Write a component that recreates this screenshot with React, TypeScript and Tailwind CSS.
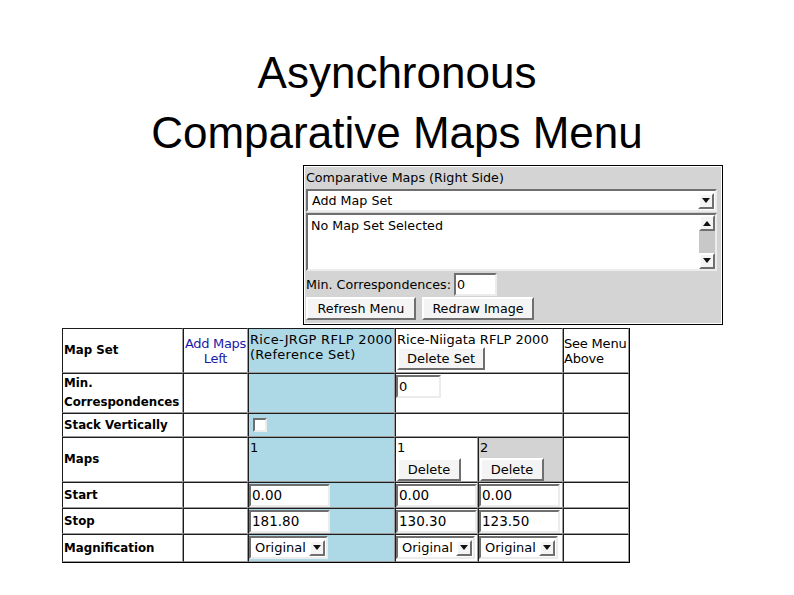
import React from 'react';

/* ─── shared widget styles ─────────────────────────────────────────── */
const inset =
  'bg-white border-2 border-t-[#6f6f6f] border-l-[#6f6f6f] border-b-[#ececec] border-r-[#ececec]';
const raised =
  'bg-[#f4f4f4] border-2 border-t-white border-l-white border-b-[#6f6f6f] border-r-[#6f6f6f]';
const cell =
  'border border-t-[#1c1c1c] border-l-[#1c1c1c] border-b-[#9c9c9c] border-r-[#9c9c9c] p-0';
const top = `${cell} align-top`;

function Arrow({ up = false }: { up?: boolean }) {
  return (
    <svg width="8" height="6" viewBox="0 0 8 6">
      <path d={up ? 'M0 6 L4 1 L8 6 Z' : 'M0 0 L8 0 L4 5 Z'} fill="#111" />
    </svg>
  );
}

function DropBtn() {
  return (
    <span className={`${raised} flex h-[16px] w-[16px] items-center justify-center`}>
      <Arrow />
    </span>
  );
}

function Select({ label, w }: { label: string; w: string }) {
  return (
    <div className={`${inset} ${w} flex h-[23px] items-center justify-between pl-[4px] pr-px`}>
      <span>{label}</span>
      <DropBtn />
    </div>
  );
}

function Btn({ label, w }: { label: string; w: string }) {
  return (
    <div className={`${raised} ${w} flex h-[23px] items-center justify-center`}>
      {label}
    </div>
  );
}

function Field({ value, w }: { value: string; w: string }) {
  return (
    <div className={`${inset} ${w} flex h-[23px] items-center pl-px`}>{value}</div>
  );
}

/* ─── top panel ────────────────────────────────────────────────────── */
function ComparativePanel() {
  return (
    <div className="ml-[303px] w-[420px] border border-black bg-white p-px">
      <div className="flex h-[156px] flex-col bg-[#d4d4d4] px-px text-[12.7px] text-black">
        <div className="flex h-[22px] items-center">Comparative Maps (Right Side)</div>
        <Select label="Add Map Set" w="w-[411px]" />
        <div className={`${inset} mt-px flex h-[58px] w-[411px] justify-between`}>
          <span className="pl-[3px] pt-px">No Map Set Selected</span>
          <div className="flex w-[16px] flex-col justify-between bg-[#c8c8c8]">
            <span className={`${raised} flex h-[16px] items-center justify-center`}>
              <Arrow up />
            </span>
            <span className={`${raised} flex h-[16px] items-center justify-center`}>
              <Arrow />
            </span>
          </div>
        </div>
        <div className="mt-px flex h-[25px] items-center gap-[3px]">
          <span>Min. Correspondences:</span>
          <Field value="0" w="w-[43px]" />
        </div>
        <div className="flex items-center gap-[6px]">
          <Btn label="Refresh Menu" w="w-[110px]" />
          <Btn label="Redraw Image" w="w-[112px]" />
        </div>
      </div>
    </div>
  );
}

/* ─── map set table ────────────────────────────────────────────────── */
function MapTable() {
  const blue = 'bg-[#add8e6]';
  const label = `${cell} align-middle font-bold text-[11.8px] pl-px whitespace-nowrap`;
  return (
    <table className="ml-[62px] mt-[3px] table-fixed border-separate border-spacing-0 border-b border-r border-black text-[13px] leading-[15px] text-black">
      <colgroup>
        <col className="w-[121px]" />
        <col className="w-[65px]" />
        <col className="w-[147px]" />
        <col className="w-[83px]" />
        <col className="w-[85px]" />
        <col className="w-[66px]" />
      </colgroup>
      <tbody>
        <tr className="h-[45px]">
          <td className={label}>Map Set</td>
          <td className={`${cell} whitespace-nowrap text-center align-middle tracking-[-0.3px] text-[#1a1aa8]`}>
            Add Maps
            <br />
            Left
          </td>
          <td className={`${top} ${blue} whitespace-nowrap pl-px pt-[3px] tracking-[0.3px]`}>
            Rice-JRGP RFLP 2000
            <br />
            (Reference Set)
          </td>
          <td className={`${top} pl-px pt-[3px]`} colSpan={2}>
            <div className="whitespace-nowrap">Rice-Niigata RFLP 2000</div>
            <Btn label="Delete Set" w="w-[88px]" />
          </td>
          <td className={`${cell} whitespace-nowrap align-middle tracking-[-0.2px]`}>
            See Menu
            <br />
            Above
          </td>
        </tr>
        <tr className="h-[40px]">
          <td className={`${label} leading-[19px]`}>
            Min.
            <br />
            Correspondences
          </td>
          <td className={cell} />
          <td className={`${cell} ${blue}`} />
          <td className={`${top} pt-px`} colSpan={2}>
            <Field value="0" w="w-[45px]" />
          </td>
          <td className={cell} />
        </tr>
        <tr className="h-[24px]">
          <td className={label}>Stack Vertically</td>
          <td className={cell} />
          <td className={`${top} ${blue} pl-[4px] pt-[4px]`}>
            <div className={`${inset} h-[14px] w-[14px]`} />
          </td>
          <td className={cell} colSpan={2} />
          <td className={cell} />
        </tr>
        <tr className="h-[45px]">
          <td className={label}>Maps</td>
          <td className={cell} />
          <td className={`${top} ${blue} pl-px pt-[2px]`}>1</td>
          <td className={`${top} pl-px pt-[2px]`}>
            1
            <Btn label="Delete" w="w-[64px] mt-[3px]" />
          </td>
          <td className={`${top} bg-[#d3d3d3] pl-px pt-[2px]`}>
            2
            <Btn label="Delete" w="w-[64px] mt-[3px]" />
          </td>
          <td className={cell} />
        </tr>
        <tr className="h-[26px] text-[13.5px]">
          <td className={label}>Start</td>
          <td className={cell} />
          <td className={`${top} ${blue} pt-px`}>
            <Field value="0.00" w="w-[81px]" />
          </td>
          <td className={`${top} pt-px`}>
            <Field value="0.00" w="w-[81px]" />
          </td>
          <td className={`${top} pt-px`}>
            <Field value="0.00" w="w-[81px]" />
          </td>
          <td className={cell} />
        </tr>
        <tr className="h-[26px] text-[13.5px]">
          <td className={label}>Stop</td>
          <td className={cell} />
          <td className={`${top} ${blue} pt-px`}>
            <Field value="181.80" w="w-[81px]" />
          </td>
          <td className={`${top} pt-px`}>
            <Field value="130.30" w="w-[81px]" />
          </td>
          <td className={`${top} pt-px`}>
            <Field value="123.50" w="w-[81px]" />
          </td>
          <td className={cell} />
        </tr>
        <tr className="h-[28px]">
          <td className={label}>Magnification</td>
          <td className={cell} />
          <td className={`${top} ${blue} pt-px`}>
            <Select label="Original" w="w-[79px]" />
          </td>
          <td className={`${top} pt-px`}>
            <Select label="Original" w="w-[79px]" />
          </td>
          <td className={`${top} pt-px`}>
            <Select label="Original" w="w-[79px]" />
          </td>
          <td className={cell} />
        </tr>
      </tbody>
    </table>
  );
}

/* ─── slide ────────────────────────────────────────────────────────── */
export default function App() {
  return (
    <div
      className="h-[595px] w-[794px] overflow-hidden bg-white"
      style={{ fontFamily: '"DejaVu Sans", sans-serif' }}
    >
      <h1
        className="pt-[43px] text-center text-[44px] font-normal leading-[60px] text-black"
        style={{ fontFamily: '"Liberation Sans", Arial, sans-serif' }}
      >
        Asynchronous
        <br />
        Comparative Maps Menu
      </h1>
      <div className="mt-[2px]">
        <ComparativePanel />
        <MapTable />
      </div>
    </div>
  );
}
